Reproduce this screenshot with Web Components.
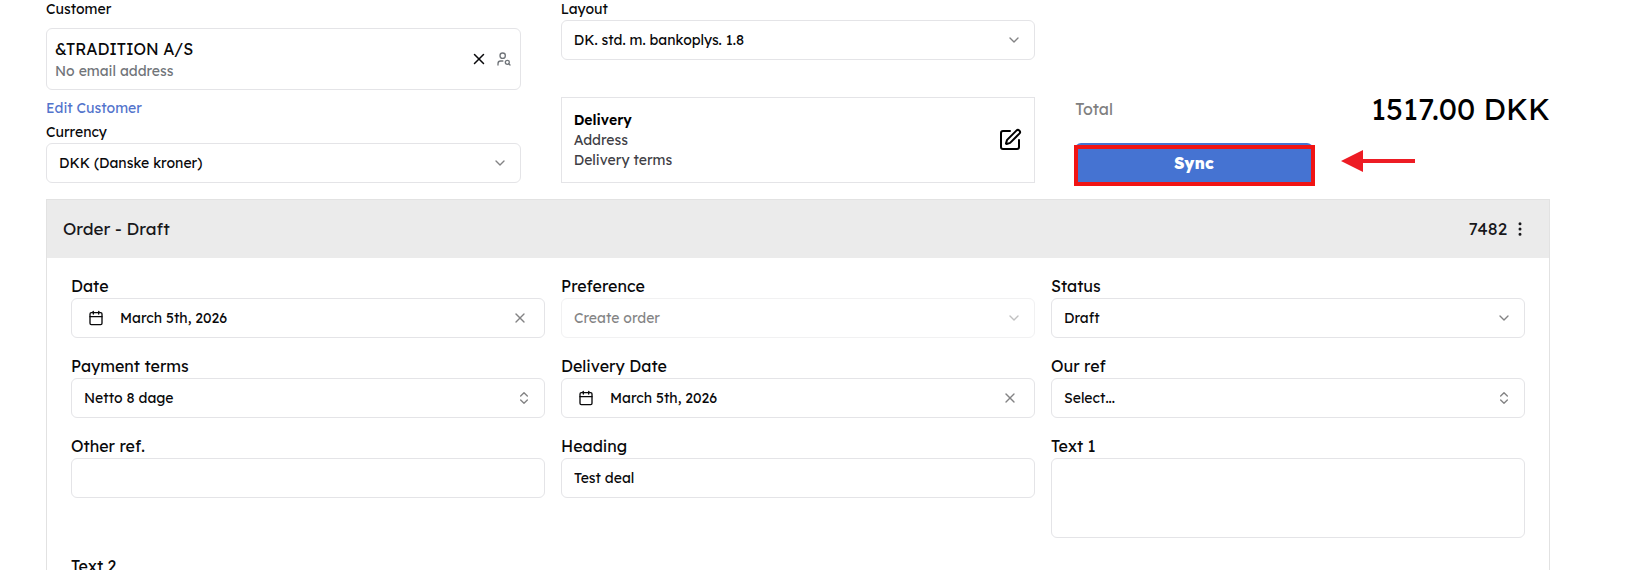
<!DOCTYPE html>
<html lang="en">
<head>
<meta charset="UTF-8">
<meta name="viewport" content="width=device-width, initial-scale=1">
<title>Order - Draft</title>
<style>
    body {
        margin: 0;
        background: #fff;
        color: #09090b;
        font-family: Lexend, Inter, "Liberation Sans", sans-serif;
        font-size: 14px;
        line-height: 20px;
    }
</style>
</head>
<body>
<order-page></order-page>

<script>
// Stroke icons on a 24x24 grid
const ICONS = {
    'x': '<path d="M18 6 6 18"/><path d="m6 6 12 12"/>',
    'chevron-down': '<path d="m6 9 6 6 6-6"/>',
    'chevrons': '<path d="m7 15 5 5 5-5"/><path d="m7 9 5-5 5 5"/>',
    'calendar': '<path d="M8 2v4"/><path d="M16 2v4"/><rect width="18" height="18" x="3" y="4" rx="2"/><path d="M3 10h18"/>',
    'user-search': '<circle cx="10" cy="7" r="4"/><path d="M10.3 15H7a4 4 0 0 0-4 4v2"/><circle cx="17" cy="17" r="3"/><path d="m21 21-1.9-1.9"/>',
    'edit': '<path d="M12 3H5a2 2 0 0 0-2 2v14a2 2 0 0 0 2 2h14a2 2 0 0 0 2-2v-7"/><path d="M18.375 2.625a1 1 0 0 1 3 3l-9.013 9.014a2 2 0 0 1-.853.505l-2.873.84a.5.5 0 0 1-.62-.62l.84-2.873a2 2 0 0 1 .506-.852z"/>',
    'dots': '<circle cx="12" cy="12" r="1"/><circle cx="12" cy="5" r="1"/><circle cx="12" cy="19" r="1"/>'
};

const BUTTON_RESET = `
    button {
        display: flex;
        align-items: center;
        padding: 0;
        border: 0;
        background: none;
        color: inherit;
        font: inherit;
        cursor: pointer;
    }
`;

/**
 * <ui-icon name="x" size="16">
 */
class UiIcon extends HTMLElement {
    connectedCallback() {
        const size = this.getAttribute('size') || 16;
        this.attachShadow({ mode: 'open' }).innerHTML = `
            <style>
                :host { display: block; flex: none; }
                svg { display: block; }
            </style>
            <svg width="${size}" height="${size}" viewBox="0 0 24 24" fill="none" stroke="currentColor"
                stroke-width="2" stroke-linecap="round" stroke-linejoin="round" aria-hidden="true">
                ${ICONS[this.getAttribute('name')] || ''}
            </svg>
        `;
    }
}

/**
 * Labelled form field.
 *
 * Attributes:
 *   label - Label text
 *   type - text | select | combo | date | textarea
 *   value - Current value
 *   small - Smaller label
 *   disabled - Dims the control
 */
class UiField extends HTMLElement {
    connectedCallback() {
        this.attachShadow({ mode: 'open' });
        this.render();
    }

    control() {
        const value = this.getAttribute('value') || '';
        const disabled = this.hasAttribute('disabled') ? 'disabled' : '';

        switch (this.getAttribute('type')) {
            case 'select':
            case 'combo': {
                const icon = this.getAttribute('type') === 'combo' ? 'chevrons' : 'chevron-down';
                return `
                    <div class="box select ${disabled}">
                        <select id="control" ${disabled}><option>${value}</option></select>
                        <ui-icon class="arrow" name="${icon}"></ui-icon>
                    </div>`;
            }
            case 'date':
                return `
                    <div class="box date">
                        <button class="pick" id="control" type="button">
                            <ui-icon name="calendar"></ui-icon>
                            <span>${value}</span>
                        </button>
                        <button class="clear" type="button" aria-label="Clear date"><ui-icon name="x"></ui-icon></button>
                    </div>`;
            case 'textarea':
                return `<textarea class="box" id="control">${value}</textarea>`;
            default:
                return `<input class="box" id="control" type="text" value="${value}">`;
        }
    }

    render() {
        this.shadowRoot.innerHTML = `
            <style>
                ${BUTTON_RESET}
                :host { display: block; min-width: 0; }
                label {
                    display: block;
                    font-size: 16px;
                    line-height: 24px;
                }
                :host([small]) label {
                    padding-bottom: 2px;
                    font-size: 14px;
                    line-height: 18px;
                }
                .box {
                    display: block;
                    box-sizing: border-box;
                    width: 100%;
                    height: 40px;
                    margin: 0;
                    border: 1px solid #e4e4e7;
                    border-radius: 6px;
                    background: #fff;
                    color: inherit;
                    font: inherit;
                }
                input.box { padding: 0 12px; }
                textarea.box { height: 80px; padding: 8px 12px; resize: none; }
                .select { display: grid; align-items: center; }
                .select > * { grid-area: 1 / 1; }
                select {
                    appearance: none;
                    width: 100%;
                    height: 38px;
                    padding: 0 36px 0 12px;
                    border: 0;
                    background: none;
                    color: inherit;
                    font: inherit;
                    opacity: 1;
                }
                .arrow {
                    justify-self: end;
                    margin-right: 12px;
                    opacity: 0.5;
                    pointer-events: none;
                }
                .disabled { opacity: 0.5; }
                .date { display: flex; align-items: center; padding: 0 16px; }
                .pick { flex: 1; gap: 16px; height: 38px; }
                .clear { opacity: 0.5; }
            </style>
            <label for="control">${this.getAttribute('label')}</label>
            ${this.control()}
        `;
    }
}

/**
 * Selected customer with clear and search buttons.
 */
class CustomerCard extends HTMLElement {
    connectedCallback() {
        this.attachShadow({ mode: 'open' }).innerHTML = `
            <style>
                ${BUTTON_RESET}
                :host {
                    display: flex;
                    align-items: center;
                    gap: 8px;
                    padding: 8px;
                    border: 1px solid #e4e4e7;
                    border-radius: 6px;
                }
                .info { flex: 1; min-width: 0; }
                .name { font-size: 16px; line-height: 24px; }
                .email, .search { color: #71757a; }
            </style>
            <div class="info">
                <div class="name"><slot name="name"></slot></div>
                <div class="email"><slot name="email"></slot></div>
            </div>
            <button type="button" aria-label="Remove customer"><ui-icon name="x" size="18"></ui-icon></button>
            <button class="search" type="button" aria-label="Find customer"><ui-icon name="user-search"></ui-icon></button>
        `;
    }
}

class DeliveryCard extends HTMLElement {
    connectedCallback() {
        this.attachShadow({ mode: 'open' }).innerHTML = `
            <style>
                ${BUTTON_RESET}
                :host {
                    display: flex;
                    align-items: center;
                    justify-content: space-between;
                    padding: 12px;
                    border: 1px solid #e4e4e7;
                }
                .title { color: #000; font-weight: 600; }
                .lines { color: #3f3f46; }
                button { color: #000; }
            </style>
            <div>
                <div class="title"><slot name="title"></slot></div>
                <div class="lines"><slot></slot></div>
            </div>
            <button type="button" aria-label="Edit delivery"><ui-icon name="edit" size="24"></ui-icon></button>
        `;
    }
}

/**
 * Order total and the sync button, with the red pointer on it.
 */
class OrderTotal extends HTMLElement {
    connectedCallback() {
        this.attachShadow({ mode: 'open' }).innerHTML = `
            <style>
                :host { display: block; }
                .total {
                    display: flex;
                    align-items: center;
                    justify-content: space-between;
                    height: 40px;
                    margin-bottom: 14px;
                }
                .label { color: #808080; font-size: 16px; }
                .amount { color: #000; font-size: 30px; line-height: 36px; }
                .actions { display: flex; align-items: center; gap: 28px; }
                .target { position: relative; width: 50%; }
                button {
                    display: block;
                    width: 100%;
                    height: 40px;
                    border: 0;
                    border-radius: 6px;
                    background: #4573d2;
                    color: #fff;
                    font: inherit;
                    font-size: 16px;
                    font-weight: 800;
                    cursor: pointer;
                }
                .frame {
                    position: absolute;
                    inset: 2px -2px -3px -1px;
                    border: 4px solid #f01414;
                    pointer-events: none;
                }
                svg { display: block; flex: none; }
            </style>
            <div class="total">
                <span class="label">Total</span>
                <span class="amount"><slot></slot></span>
            </div>
            <div class="actions">
                <div class="target">
                    <button type="button">Sync</button>
                    <div class="frame"></div>
                </div>
                <svg width="74" height="26" viewBox="0 0 74 26" fill="#ed1c24" aria-hidden="true">
                    <path d="M0 11 22 0v9h52v4H22v9z"/>
                </svg>
            </div>
        `;
    }
}

class OrderPanel extends HTMLElement {
    connectedCallback() {
        this.attachShadow({ mode: 'open' }).innerHTML = `
            <style>
                ${BUTTON_RESET}
                :host { display: block; border: 1px solid #e2e2e2; }
                header {
                    display: flex;
                    align-items: center;
                    gap: 4px;
                    padding: 15px 20px 15px 16px;
                    background: #ebebeb;
                    color: #18181b;
                    font-size: 17px;
                    line-height: 28px;
                }
                h2 { flex: 1; margin: 0; font: inherit; }
                .fields {
                    display: grid;
                    grid-template-columns: repeat(3, minmax(0, 1fr));
                    gap: 16px;
                    padding: 16px 24px;
                }
            </style>
            <header>
                <h2><slot name="title"></slot></h2>
                <slot name="number"></slot>
                <button type="button" aria-label="More actions"><ui-icon name="dots" size="18"></ui-icon></button>
            </header>
            <div class="fields"><slot></slot></div>
        `;
    }
}

class OrderPage extends HTMLElement {
    connectedCallback() {
        this.attachShadow({ mode: 'open' }).innerHTML = `
            <style>
                :host { display: block; padding: 0 83px 0 46px; }
                .top {
                    display: grid;
                    grid-template-columns: repeat(3, minmax(0, 1fr));
                    gap: 40px;
                    margin-bottom: 16px;
                }
                .column {
                    display: flex;
                    flex-direction: column;
                    justify-content: space-between;
                }
                .column.end { justify-content: flex-end; }
                .caption { padding-bottom: 2px; line-height: 18px; }
                customer-card { margin: 8px 0; }
                .edit { display: inline-block; color: #5374cc; text-decoration: none; }
                .currency { margin-top: 5px; }
            </style>
            <section class="top">
                <div class="column">
                    <div>
                        <div class="caption">Customer</div>
                        <customer-card>
                            <span slot="name">&amp;TRADITION A/S</span>
                            <span slot="email">No email address</span>
                        </customer-card>
                        <a class="edit" href="#customer">Edit Customer</a>
                    </div>
                    <ui-field class="currency" small label="Currency" type="select" value="DKK (Danske kroner)"></ui-field>
                </div>
                <div class="column">
                    <ui-field small label="Layout" type="select" value="DK. std. m. bankoplys. 1.8"></ui-field>
                    <delivery-card>
                        <span slot="title">Delivery</span>
                        <div>Address</div>
                        <div>Delivery terms</div>
                    </delivery-card>
                </div>
                <div class="column end">
                    <order-total>1517.00 DKK</order-total>
                </div>
            </section>
            <order-panel>
                <span slot="title">Order - Draft</span>
                <span slot="number">7482</span>
                <ui-field label="Date" type="date" value="March 5th, 2026"></ui-field>
                <ui-field label="Preference" type="select" value="Create order" disabled></ui-field>
                <ui-field label="Status" type="select" value="Draft"></ui-field>
                <ui-field label="Payment terms" type="combo" value="Netto 8 dage"></ui-field>
                <ui-field label="Delivery Date" type="date" value="March 5th, 2026"></ui-field>
                <ui-field label="Our ref" type="combo" value="Select..."></ui-field>
                <ui-field label="Other ref." type="text"></ui-field>
                <ui-field label="Heading" type="text" value="Test deal"></ui-field>
                <ui-field label="Text 1" type="textarea"></ui-field>
                <ui-field label="Text 2" type="textarea"></ui-field>
            </order-panel>
        `;
    }
}

customElements.define('ui-icon', UiIcon);
customElements.define('ui-field', UiField);
customElements.define('customer-card', CustomerCard);
customElements.define('delivery-card', DeliveryCard);
customElements.define('order-total', OrderTotal);
customElements.define('order-panel', OrderPanel);
customElements.define('order-page', OrderPage);
</script>
</body>
</html>
